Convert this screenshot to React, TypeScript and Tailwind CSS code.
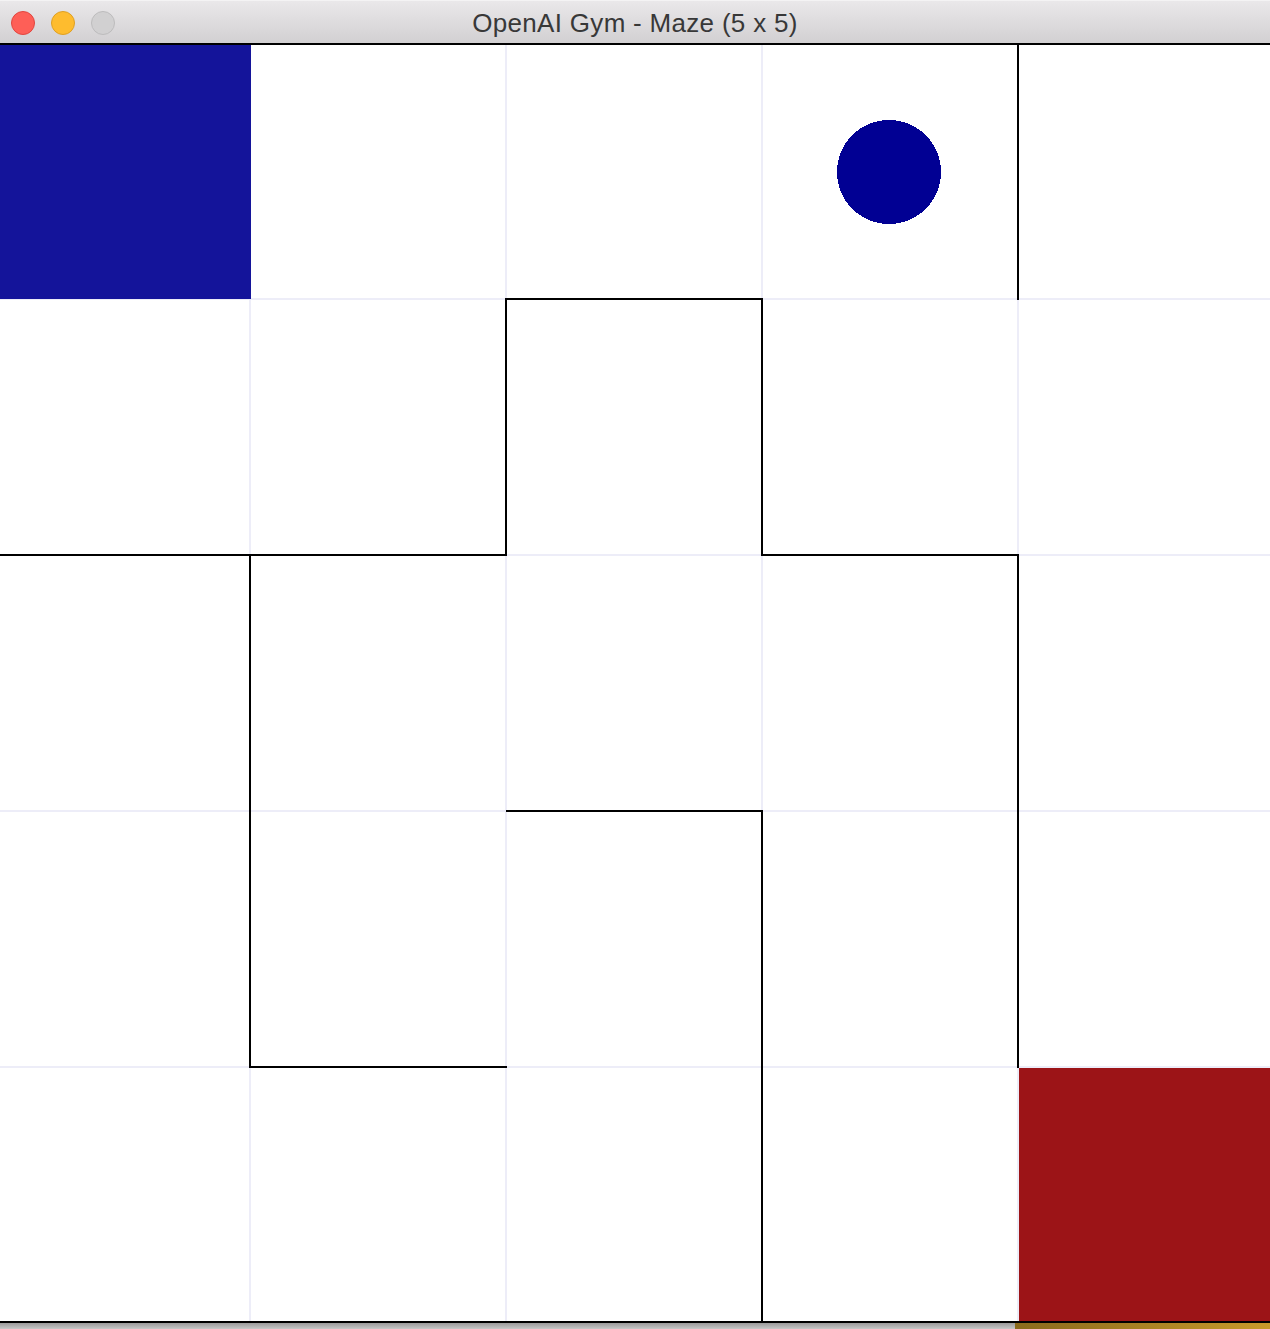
const CELL = 256
const N = 5

// walls as [x1, y1, x2, y2] in canvas units
const walls: [number, number, number, number][] = [
  [1024, 0, 1024, 256],
  [512, 256, 768, 256],
  [512, 256, 512, 512],
  [768, 256, 768, 512],
  [0, 512, 512, 512],
  [768, 512, 1024, 512],
  [256, 512, 256, 1024],
  [1024, 512, 1024, 1024],
  [512, 768, 768, 768],
  [768, 768, 768, 1280],
  [256, 1024, 512, 1024],
  [0, 1, 1280, 1],
  [0, 1279, 1280, 1279],
]

function TitleBar() {
  return (
    <div className="relative h-[43px] flex items-center justify-center bg-gradient-to-b from-[#eae8ea] to-[#d2d0d2] border-t border-[#f4f3f4]">
      <div className="absolute left-[11px] top-[10px] flex gap-4">
        <span className="w-6 h-6 rounded-full bg-[#fe5f57] border border-[#e2463f]" />
        <span className="w-6 h-6 rounded-full bg-[#febc2e] border border-[#dfa023]" />
        <span className="w-6 h-6 rounded-full bg-[#d1d0d1] border border-[#bdbcbd]" />
      </div>
      <span className="text-[26px] text-[#383838] tracking-[0.3px] pt-[2px]" style={{ fontFamily: '"Liberation Sans", Arial, sans-serif' }}>
        OpenAI Gym - Maze (5 x 5)
      </span>
    </div>
  )
}

function Maze() {
  return (
    <div className="relative w-[1280px] h-[1280px] ml-[-6px] bg-white">
      <svg className="absolute inset-0" width={1280} height={1280} viewBox="0 0 1280 1280" shapeRendering="crispEdges">
        {Array.from({ length: N - 1 }).map((_, i) => (
          <g key={i}>
            <line x1={(i + 1) * CELL} y1={0} x2={(i + 1) * CELL} y2={1280} stroke="#ededf8" strokeWidth={2} />
            <line x1={0} y1={(i + 1) * CELL} x2={1280} y2={(i + 1) * CELL} stroke="#ededf8" strokeWidth={2} />
          </g>
        ))}
        <rect x={0} y={0} width={257} height={256} fill="#14149a" />
        <rect x={1025} y={1025} width={255} height={255} fill="#9c1417" />
        <circle cx={895} cy={129} r={52} fill="#010093" />
        {walls.map(([x1, y1, x2, y2], i) => (
          <line
            key={i}
            x1={x1}
            y1={x1 === x2 ? y1 - 1 : y1}
            x2={x2 + (y1 === y2 ? 1 : 0)}
            y2={x1 === x2 ? y2 + 1 : y2}
            stroke="#000"
            strokeWidth={2}
          />
        ))}
      </svg>
    </div>
  )
}

export default function App() {
  return (
    <div className="w-[1270px] h-[1329px] overflow-hidden bg-white flex flex-col">
      <TitleBar />
      <Maze />
      <div className="flex h-[6px]">
        <div className="w-[1015px] bg-gradient-to-b from-[#9a9a9a] to-[#c8c8c8]" />
        <div className="flex-1 bg-gradient-to-r from-[#8a6a1c] to-[#c89a2a]" />
      </div>
    </div>
  )
}
